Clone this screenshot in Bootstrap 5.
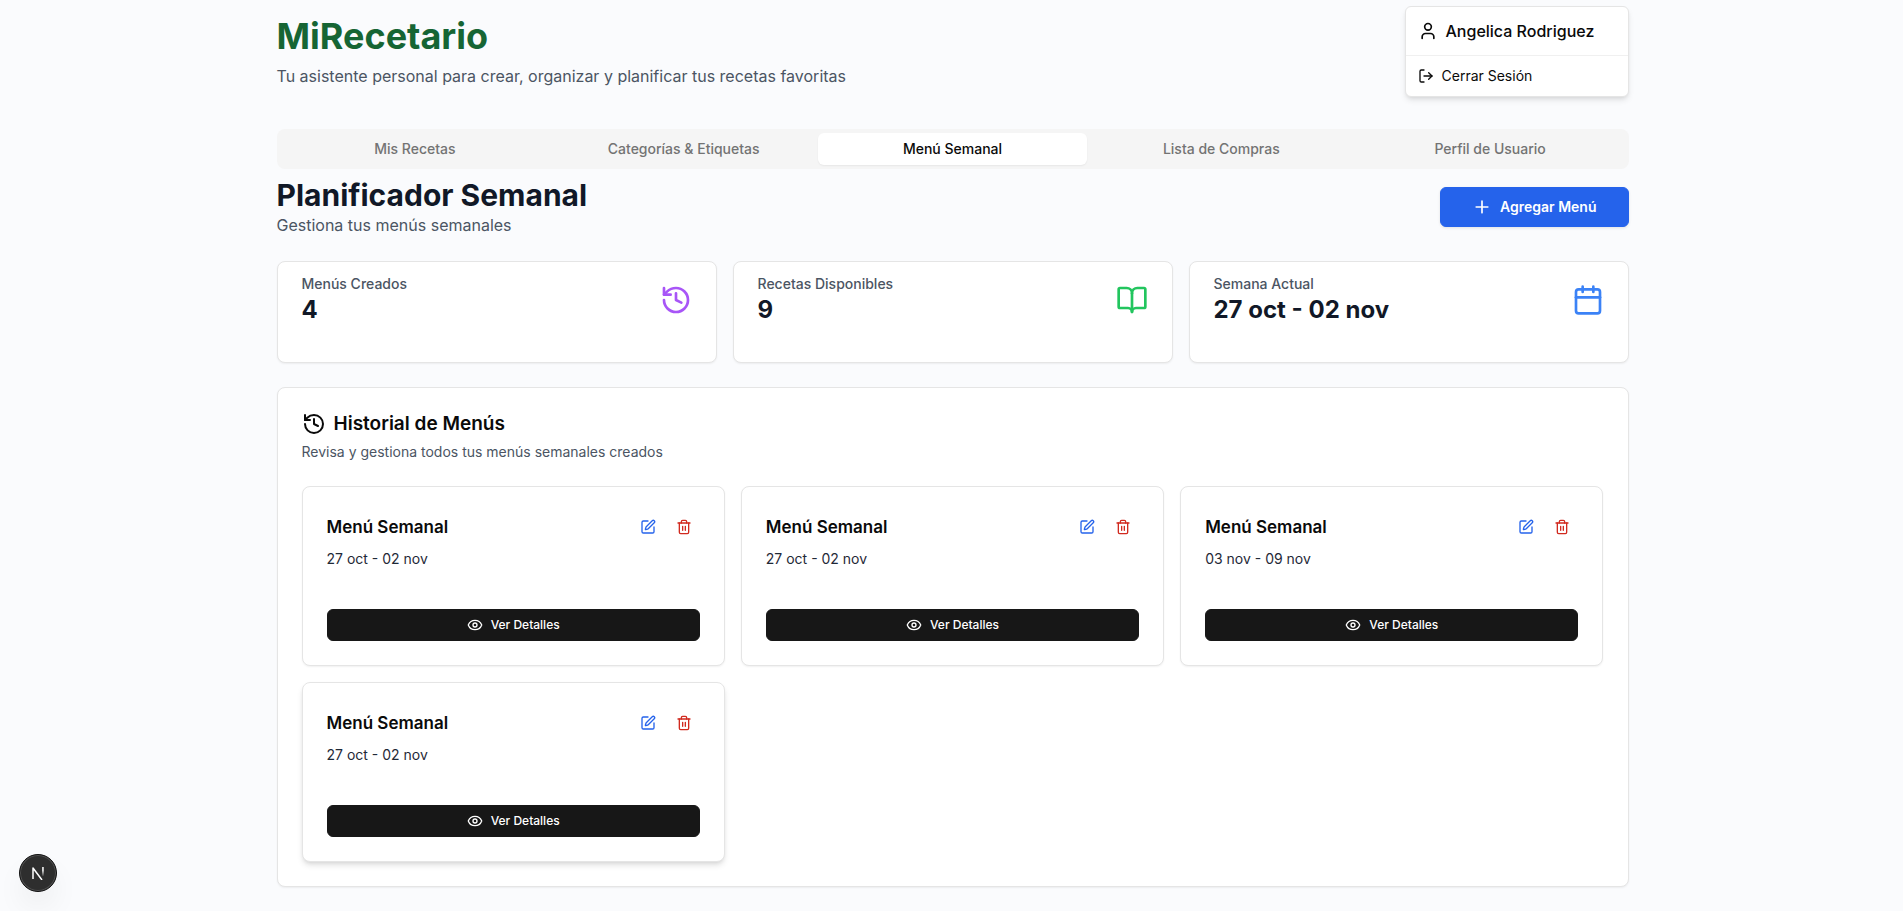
<!DOCTYPE html>
<html lang="es">
<head>
<meta charset="utf-8">
<meta name="viewport" content="width=device-width, initial-scale=1">
<title>MiRecetario</title>
<link href="https://cdn.jsdelivr.net/npm/bootstrap@5.3.0/dist/css/bootstrap.min.css" rel="stylesheet">
<style>
  body { font-family: Inter, "Liberation Sans", sans-serif; font-size: 16px; line-height: 24px; color: #0a0a0a; background: #fafbfd; padding-left: 2px; }
  svg { flex: none; fill: none; stroke: currentColor; stroke-width: 2; stroke-linecap: round; stroke-linejoin: round; }
  .page { max-width: 1400px; padding: 16px 24px 24px; }
  .i16 { width: 16px; height: 16px; }
  .i20 { width: 20px; height: 20px; }
  .i24 { width: 24px; height: 24px; }
  .i32 { width: 32px; height: 32px; }
  .t14 { font-size: 14px; line-height: 20px; }
  .muted { color: #4b5563; }
  .brand { font-size: 36px; line-height: 40px; font-weight: 700; color: #166534; }
  .site-header { margin-bottom: 41px; }
  .user-menu { top: -10px; right: 0; width: 224px; background: #fff; border: 1px solid #e5e5e5; border-radius: 6px; box-shadow: 0 4px 6px -1px rgba(0,0,0,.1), 0 2px 4px -2px rgba(0,0,0,.1); }
  .user-name { padding: 12px; font-weight: 500; border-bottom: 1px solid #f0f0f0; }
  .logout { padding: 10px 12px; color: #0a0a0a; }
  .tabs { background: #f5f5f5; border-radius: 8px; padding: 4px; margin-bottom: 8px; }
  .tabs .nav-link { padding: 6px 12px; border: 0; background: none; font-size: 14px; line-height: 20px; font-weight: 500; color: #737373; border-radius: 6px; }
  .tabs .nav-link.active { background: #fff; color: #0a0a0a; box-shadow: 0 1px 2px rgba(0,0,0,.06); }
  .section-title { font-size: 30px; line-height: 36px; font-weight: 700; color: #111827; }
  .btn-add { --bs-btn-bg: #2563eb; --bs-btn-border-color: #2563eb; --bs-btn-hover-bg: #1d4ed8; --bs-btn-color: #fff; --bs-btn-hover-color: #fff; padding: 9px 31px; border-radius: 6px; font-size: 14px; line-height: 20px; font-weight: 600; box-shadow: 0 1px 3px rgba(0,0,0,.1); }
  .panel { --bs-card-border-color: #e5e5e5; --bs-card-border-radius: 8px; color: #0a0a0a; box-shadow: 0 1px 2px rgba(0,0,0,.06); }
  .panel.raised { box-shadow: 0 4px 6px -1px rgba(0,0,0,.12), 0 2px 4px -2px rgba(0,0,0,.1); }
  .stat { padding: 12px 24px 36px; }
  .stat-label { font-weight: 500; }
  .stat-value { font-size: 24px; line-height: 32px; font-weight: 700; color: #111827; }
  .history-title { font-size: 19px; line-height: 24px; font-weight: 600; margin-bottom: 6px; }
  .menu-title { font-size: 17px; line-height: 24px; font-weight: 600; }
  .menu-date { color: #1f2937; margin: 6px 0 40px; }
  .btn-tool { width: 32px; height: 32px; padding: 0; border: 0; }
  .tool-edit { color: #2563eb; }
  .tool-delete { color: #d12a1f; }
  .btn-detail { --bs-btn-bg: #171717; --bs-btn-border-color: #171717; --bs-btn-hover-bg: #333; --bs-btn-color: #fff; --bs-btn-hover-color: #fff; height: 32px; padding: 0; border-radius: 6px; font-size: 12px; line-height: 16px; font-weight: 500; }
  .dev-button { left: 19px; bottom: 19px; width: 38px; height: 38px; padding: 0; border: 1px solid #111; border-radius: 50%; background: #2e2e2e; color: #fff; box-shadow: inset 0 0 0 1px #505050, 0 16px 32px -8px rgba(0,0,0,.14); }
</style>
</head>
<body>
<svg class="d-none" aria-hidden="true">
  <symbol id="history" viewBox="0 0 24 24"><path d="M3 12a9 9 0 1 0 9-9 9.75 9.75 0 0 0-6.74 2.74L3 8"/><path d="M3 3v5h5"/><path d="M12 7v5l4 2"/></symbol>
  <symbol id="pen" viewBox="0 0 24 24"><path d="M12 3H5a2 2 0 0 0-2 2v14a2 2 0 0 0 2 2h14a2 2 0 0 0 2-2v-7"/><path d="M18.375 2.625a1 1 0 0 1 3 3l-9.013 9.014a2 2 0 0 1-.853.505l-2.873.84a.5.5 0 0 1-.62-.62l.84-2.873a2 2 0 0 1 .506-.852z"/></symbol>
  <symbol id="trash" viewBox="0 0 24 24"><path d="M3 6h18"/><path d="M19 6v14c0 1-1 2-2 2H7c-1 0-2-1-2-2V6"/><path d="M8 6V4c0-1 1-2 2-2h4c1 0 2 1 2 2v2"/><path d="M10 11v6M14 11v6"/></symbol>
  <symbol id="eye" viewBox="0 0 24 24"><path d="M2.062 12.348a1 1 0 0 1 0-.696 10.75 10.75 0 0 1 19.876 0 1 1 0 0 1 0 .696 10.75 10.75 0 0 1-19.876 0"/><circle cx="12" cy="12" r="3"/></symbol>
</svg>

<main class="page container-fluid">
  <header class="site-header position-relative">
    <h1 class="brand mb-2">MiRecetario</h1>
    <p class="muted mb-0">Tu asistente personal para crear, organizar y planificar tus recetas favoritas</p>
    <div class="user-menu position-absolute">
      <div class="user-name d-flex align-items-center gap-2">
        <svg class="i20" viewBox="0 0 24 24"><path d="M19 21v-2a4 4 0 0 0-4-4H9a4 4 0 0 0-4 4v2"/><circle cx="12" cy="7" r="4"/></svg>
        <span>Angelica Rodriguez</span>
      </div>
      <a href="#" class="logout t14 d-flex align-items-center gap-2 text-decoration-none">
        <svg class="i16" viewBox="0 0 24 24"><path d="m16 17 5-5-5-5"/><path d="M21 12H9"/><path d="M9 21H5a2 2 0 0 1-2-2V5a2 2 0 0 1 2-2h4"/></svg>
        <span>Cerrar Sesión</span>
      </a>
    </div>
  </header>

  <div class="tabs nav nav-justified flex-nowrap" role="tablist">
    <button class="nav-link" type="button" role="tab">Mis Recetas</button>
    <button class="nav-link" type="button" role="tab">Categorías &amp; Etiquetas</button>
    <button class="nav-link active" type="button" role="tab" aria-selected="true">Menú Semanal</button>
    <button class="nav-link" type="button" role="tab">Lista de Compras</button>
    <button class="nav-link" type="button" role="tab">Perfil de Usuario</button>
  </div>

  <div class="d-flex justify-content-between align-items-center mb-4">
    <div>
      <h2 class="section-title mb-0">Planificador Semanal</h2>
      <p class="muted mb-0">Gestiona tus menús semanales</p>
    </div>
    <button type="button" class="btn btn-add d-flex align-items-center gap-2">
      <svg class="i20" viewBox="0 0 24 24"><path d="M5 12h14M12 5v14"/></svg>
      <span>Agregar Menú</span>
    </button>
  </div>

  <section class="row row-cols-1 row-cols-md-3 gx-3 gy-3 mb-4">
    <div class="col"><div class="card panel"><div class="stat d-flex justify-content-between align-items-center">
      <div><div class="stat-label t14 muted">Menús Creados</div><div class="stat-value">4</div></div>
      <svg class="i32" style="color:#a855f7"><use href="#history"/></svg>
    </div></div></div>
    <div class="col"><div class="card panel"><div class="stat d-flex justify-content-between align-items-center">
      <div><div class="stat-label t14 muted">Recetas Disponibles</div><div class="stat-value">9</div></div>
      <svg class="i32" style="color:#22c55e" viewBox="0 0 24 24"><path d="M12 7v14"/><path d="M3 18a1 1 0 0 1-1-1V4a1 1 0 0 1 1-1h5a4 4 0 0 1 4 4 4 4 0 0 1 4-4h5a1 1 0 0 1 1 1v13a1 1 0 0 1-1 1h-6a3 3 0 0 0-3 3 3 3 0 0 0-3-3z"/></svg>
    </div></div></div>
    <div class="col"><div class="card panel"><div class="stat d-flex justify-content-between align-items-center">
      <div><div class="stat-label t14 muted">Semana Actual</div><div class="stat-value">27 oct - 02 nov</div></div>
      <svg class="i32" style="color:#3b82f6" viewBox="0 0 24 24"><path d="M8 2v4M16 2v4"/><rect width="18" height="18" x="3" y="4" rx="2"/><path d="M3 10h18"/></svg>
    </div></div></div>
  </section>

  <section class="card panel p-4">
    <h3 class="history-title d-flex align-items-center gap-2"><svg class="i24"><use href="#history"/></svg>Historial de Menús</h3>
    <p class="t14 muted mb-4">Revisa y gestiona todos tus menús semanales creados</p>
    <div class="row row-cols-1 row-cols-md-2 row-cols-lg-3 g-3">
      <div class="col"><article class="card panel p-4">
        <div class="d-flex justify-content-between align-items-center">
          <h4 class="menu-title mb-0">Menú Semanal</h4>
          <div class="d-flex gap-1">
            <button type="button" class="btn btn-tool tool-edit d-flex align-items-center justify-content-center" aria-label="Editar"><svg class="i16"><use href="#pen"/></svg></button>
            <button type="button" class="btn btn-tool tool-delete d-flex align-items-center justify-content-center" aria-label="Eliminar"><svg class="i16"><use href="#trash"/></svg></button>
          </div>
        </div>
        <p class="menu-date t14">27 oct - 02 nov</p>
        <button type="button" class="btn btn-detail d-flex align-items-center justify-content-center gap-2"><svg class="i16"><use href="#eye"/></svg>Ver Detalles</button>
      </article></div>
      <div class="col"><article class="card panel p-4">
        <div class="d-flex justify-content-between align-items-center">
          <h4 class="menu-title mb-0">Menú Semanal</h4>
          <div class="d-flex gap-1">
            <button type="button" class="btn btn-tool tool-edit d-flex align-items-center justify-content-center" aria-label="Editar"><svg class="i16"><use href="#pen"/></svg></button>
            <button type="button" class="btn btn-tool tool-delete d-flex align-items-center justify-content-center" aria-label="Eliminar"><svg class="i16"><use href="#trash"/></svg></button>
          </div>
        </div>
        <p class="menu-date t14">27 oct - 02 nov</p>
        <button type="button" class="btn btn-detail d-flex align-items-center justify-content-center gap-2"><svg class="i16"><use href="#eye"/></svg>Ver Detalles</button>
      </article></div>
      <div class="col"><article class="card panel p-4">
        <div class="d-flex justify-content-between align-items-center">
          <h4 class="menu-title mb-0">Menú Semanal</h4>
          <div class="d-flex gap-1">
            <button type="button" class="btn btn-tool tool-edit d-flex align-items-center justify-content-center" aria-label="Editar"><svg class="i16"><use href="#pen"/></svg></button>
            <button type="button" class="btn btn-tool tool-delete d-flex align-items-center justify-content-center" aria-label="Eliminar"><svg class="i16"><use href="#trash"/></svg></button>
          </div>
        </div>
        <p class="menu-date t14">03 nov - 09 nov</p>
        <button type="button" class="btn btn-detail d-flex align-items-center justify-content-center gap-2"><svg class="i16"><use href="#eye"/></svg>Ver Detalles</button>
      </article></div>
      <div class="col"><article class="card panel raised p-4">
        <div class="d-flex justify-content-between align-items-center">
          <h4 class="menu-title mb-0">Menú Semanal</h4>
          <div class="d-flex gap-1">
            <button type="button" class="btn btn-tool tool-edit d-flex align-items-center justify-content-center" aria-label="Editar"><svg class="i16"><use href="#pen"/></svg></button>
            <button type="button" class="btn btn-tool tool-delete d-flex align-items-center justify-content-center" aria-label="Eliminar"><svg class="i16"><use href="#trash"/></svg></button>
          </div>
        </div>
        <p class="menu-date t14">27 oct - 02 nov</p>
        <button type="button" class="btn btn-detail d-flex align-items-center justify-content-center gap-2"><svg class="i16"><use href="#eye"/></svg>Ver Detalles</button>
      </article></div>
    </div>
  </section>
</main>

<button type="button" class="dev-button position-fixed d-flex align-items-center justify-content-center" aria-label="Herramientas de desarrollo">
  <svg width="14" height="14" viewBox="0 0 14 14" style="stroke-width:1.5;stroke-linecap:butt">
    <defs><linearGradient id="fade" x1="0" y1="0" x2="0" y2="1"><stop offset=".4" stop-color="#fff"/><stop offset="1" stop-color="#fff" stop-opacity=".1"/></linearGradient></defs>
    <path d="M2 13V2l9 12"/><path d="M11.2 1h1.5v9h-1.5z" fill="url(#fade)" stroke="none"/>
  </svg>
</button>
<script src="https://cdn.jsdelivr.net/npm/bootstrap@5.3.0/dist/js/bootstrap.bundle.min.js"></script>
</body>
</html>
